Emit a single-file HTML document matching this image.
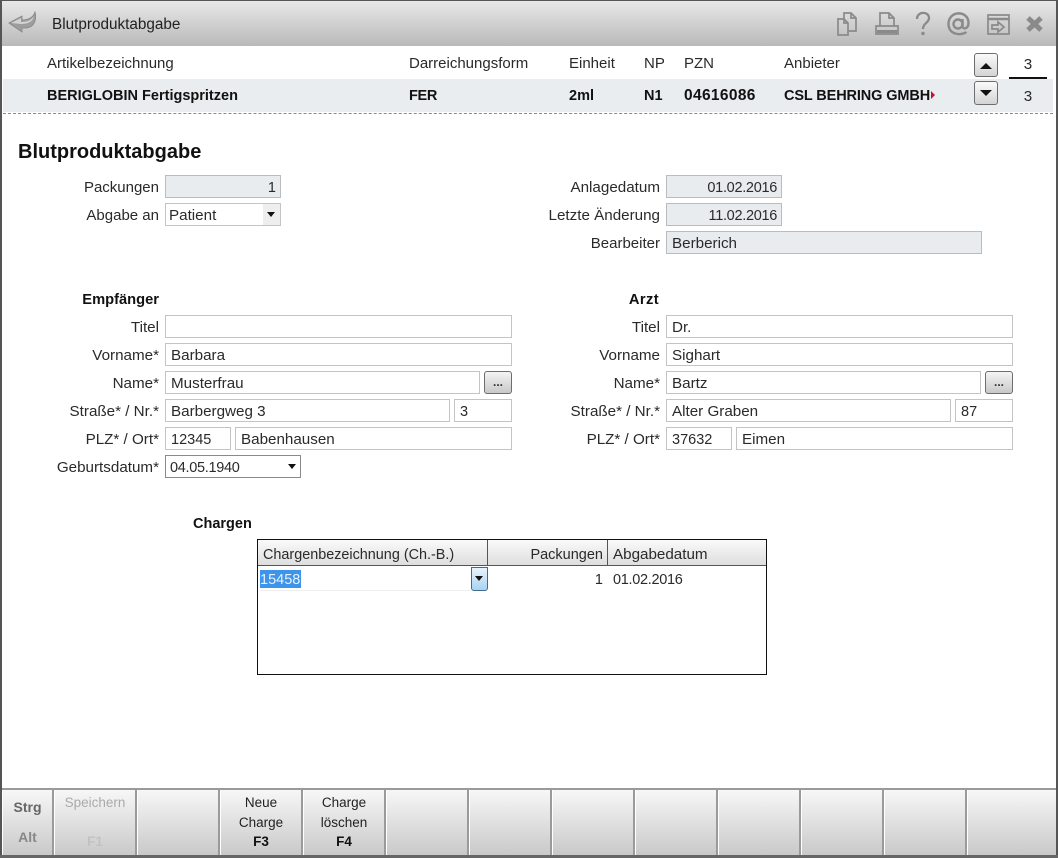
<!DOCTYPE html>
<html><head><meta charset="utf-8"><style>
html,body{margin:0;padding:0;background:#fff}
#p{position:relative;width:1058px;height:858px;overflow:hidden;background:#fff;font-family:"Liberation Sans",sans-serif;font-size:15.2px;color:#2a2a2a}
#p div{position:absolute;box-sizing:border-box;white-space:nowrap}
.l{height:20px;line-height:22px;text-align:right}
.t{height:20px;line-height:20px}
.h{font-size:15px;top:54px;line-height:20px}
.b{font-weight:bold;color:#111;font-size:14.5px}
.f{border:1px solid #c4c4c4;background:#fff;height:23px;line-height:23px;padding-left:5px}
.g{background:#e9ecef;border-color:#bcbcbc}
.r{text-align:right;padding-right:4px;padding-left:0}
.n{font-size:14.5px;line-height:25px}
.dt{font-size:14.5px;letter-spacing:-.3px;line-height:25px}
.d{background:linear-gradient(#f4f4f4,#c8c8c8);border:1px solid #6e6e6e;border-radius:3px;width:28px;height:23px;text-align:center;line-height:20px;font-size:12px;font-weight:bold;color:#333}
.k{top:790px;height:65px;background:linear-gradient(#f7f7f7,#c9c9c9);border-left:1px solid #fff;border-right:2px solid #9a9a9a;text-align:center;font-size:13.5px;line-height:19.5px;color:#222;padding-top:3px}
.tri{width:0;height:0;border-left:4px solid transparent;border-right:4px solid transparent}
</style></head><body><div id="p">
<div style="left:0;top:0;width:1058px;height:46px;background:linear-gradient(#e9e9e9,#b9b9b9)"></div>
<div style="left:0;top:0;width:1058px;height:1px;background:#555"></div>
<div style="left:0;top:0;width:2px;height:858px;background:#555"></div>
<div style="left:1056px;top:0;width:2px;height:858px;background:#555"></div>
<div style="left:0;top:855px;width:1058px;height:3px;background:#666"></div>

<svg style="position:absolute;left:8px;top:10px" width="28" height="24" viewBox="0 0 28 24"><path d="M1 13 L14 6 L14 10 C20 10 25 8 27 2 C29 10 26 17 19 18 L14 18 L14 22 Z" fill="#9d9d9d" stroke="#858585" stroke-width=".8"/><path d="M3 13 L13 8 L13 12 C18 12 23 11 26 6 C25 11 21 14 13 14Z" fill="#d2d2d2"/></svg>
<div class="t" style="left:52px;top:15px;font-size:15.3px;color:#222">Blutproduktabgabe</div>

<svg style="position:absolute;left:836px;top:11px" width="215" height="26" viewBox="0 0 215 26" fill="none" stroke="#8a8a8a">
<g stroke-width="1.7"><path d="M2 8h6l4 4v12H2z"/><path d="M8 8V2h7l5 5v13h-8"/><path d="M15 2v5h5M8 8v4h4"/></g>
<g stroke-width="1.7"><path d="M44 15V2h9l5 5v8"/><path d="M53 2v5h5"/><path d="M40 15h22v8H40z"/></g><path d="M41 20.500h20" stroke-width="3"/>
<path d="M81 8c0-8 12-8 12-1 0 5-6 5-6 11" stroke-width="2.300"/><circle cx="87" cy="22.500" r="1.700" fill="#8a8a8a" stroke="none"/>
<g stroke-width="2.400"><circle cx="122" cy="13" r="4.500"/><path d="M126.500 8v7c0 4 6 3 6-3 0-13-20-13-20 1 0 11 13 12 18 8"/></g>
<g stroke-width="1.700"><path d="M152 4h21v19h-21z"/><path d="M152 8h21" stroke-width="2.500"/><path d="M156 14h6v-3l6 5-6 5v-3h-6z"/></g>
<path d="M192 7l13 12M205 7l-13 12" stroke-width="5"/>
</svg>

<div class="t h" style="left:47px">Artikelbezeichnung</div>
<div class="t h" style="left:409px">Darreichungsform</div>
<div class="t h" style="left:569px">Einheit</div>
<div class="t h" style="left:644px">NP</div>
<div class="t h" style="left:684px">PZN</div>
<div class="t h" style="left:784px">Anbieter</div>
<div style="left:3px;top:79px;width:1050px;height:33px;background:#e9edf0"></div>
<div class="t b" style="left:47px;top:86px">BERIGLOBIN Fertigspritzen</div>
<div class="t b" style="left:409px;top:86px;letter-spacing:-.3px">FER</div>
<div class="t b" style="left:569px;top:86px">2ml</div>
<div class="t b" style="left:644px;top:86px">N1</div>
<div class="t b" style="left:684px;top:86px;font-size:15.5px;letter-spacing:.35px">04616086</div>
<div class="t b" style="left:784px;top:86px;letter-spacing:-.12px">CSL BEHRING GMBH</div>
<div style="left:931px;top:91px;width:0;height:0;border-left:4px solid #c8102e;border-top:4px solid transparent;border-bottom:4px solid transparent"></div>

<div class="d" style="left:974px;top:53px;width:24px;height:24px;background:linear-gradient(#fafafa,#d4d4d4)"><div class="tri" style="left:5px;top:9px;border-left-width:6px;border-right-width:6px;border-bottom:6px solid #111"></div></div>
<div class="d" style="left:974px;top:81px;width:24px;height:24px;background:linear-gradient(#fafafa,#d4d4d4)"><div class="tri" style="left:5px;top:8px;border-left-width:6px;border-right-width:6px;border-top:6px solid #111"></div></div>
<div class="t" style="left:1009px;top:55px;width:38px;text-align:center">3</div>
<div style="left:1009px;top:77px;width:38px;height:2px;background:#111"></div>
<div class="t" style="left:1009px;top:87px;width:38px;text-align:center">3</div>
<div style="left:3px;top:113px;width:1050px;border-top:1px dashed #8a8a8a"></div>

<div class="t b" style="left:18px;top:142px;font-size:20px">Blutproduktabgabe</div>

<div class="l" style="left:20px;width:139px;top:177px;font-size:15px">Packungen</div>
<div class="f g r n" style="left:165px;top:175px;width:116px">1</div>
<div class="l" style="left:20px;width:139px;top:205px;font-size:15px">Abgabe an</div>
<div class="f" style="left:165px;top:203px;width:116px;padding-left:3px">Patient</div>
<div style="left:263px;top:204px;width:17px;height:21px;background:#eee"></div>
<div class="tri" style="left:267px;top:212px;border-top:5px solid #111"></div>

<div class="l" style="left:500px;width:160px;top:177px">Anlagedatum</div>
<div class="f g r dt" style="left:666px;top:175px;width:116px">01.02.2016</div>
<div class="l" style="left:500px;width:160px;top:205px">Letzte Änderung</div>
<div class="f g r dt" style="left:666px;top:203px;width:116px">11.02.2016</div>
<div class="l" style="left:500px;width:160px;top:233px;font-size:15px">Bearbeiter</div>
<div class="f g" style="left:666px;top:231px;width:316px">Berberich</div>

<div class="t b" style="left:20px;width:139px;top:290px;text-align:right;font-size:14.7px">Empfänger</div>
<div class="l" style="left:20px;width:139px;top:317px">Titel</div>
<div class="f" style="left:165px;top:315px;width:347px"></div>
<div class="l" style="left:20px;width:139px;top:345px">Vorname*</div>
<div class="f" style="left:165px;top:343px;width:347px">Barbara</div>
<div class="l" style="left:20px;width:139px;top:373px">Name*</div>
<div class="f" style="left:165px;top:371px;width:315px">Musterfrau</div>
<div class="d" style="left:484px;top:371px">...</div>
<div class="l" style="left:20px;width:139px;top:401px">Straße* / Nr.*</div>
<div class="f" style="left:165px;top:399px;width:285px">Barbergweg 3</div>
<div class="f n" style="left:454px;top:399px;width:58px">3</div>
<div class="l" style="left:20px;width:139px;top:429px">PLZ* / Ort*</div>
<div class="f n" style="left:165px;top:427px;width:66px">12345</div>
<div class="f" style="left:235px;top:427px;width:277px">Babenhausen</div>
<div class="l" style="left:20px;width:139px;top:457px">Geburtsdatum*</div>
<div class="f dt" style="left:165px;top:455px;width:136px;border-color:#8a8a8a;padding-left:4px">04.05.1940</div>
<div class="tri" style="left:288px;top:464px;border-top:5px solid #111"></div>

<div class="t b" style="left:500px;width:159px;top:290px;text-align:right;font-size:14.7px;letter-spacing:.4px">Arzt</div>
<div class="l" style="left:500px;width:160px;top:317px">Titel</div>
<div class="f" style="left:666px;top:315px;width:347px">Dr.</div>
<div class="l" style="left:500px;width:160px;top:345px">Vorname</div>
<div class="f" style="left:666px;top:343px;width:347px">Sighart</div>
<div class="l" style="left:500px;width:160px;top:373px">Name*</div>
<div class="f" style="left:666px;top:371px;width:315px">Bartz</div>
<div class="d" style="left:985px;top:371px">...</div>
<div class="l" style="left:500px;width:160px;top:401px">Straße* / Nr.*</div>
<div class="f" style="left:666px;top:399px;width:285px">Alter Graben</div>
<div class="f n" style="left:955px;top:399px;width:58px">87</div>
<div class="l" style="left:500px;width:160px;top:429px">PLZ* / Ort*</div>
<div class="f n" style="left:666px;top:427px;width:66px">37632</div>
<div class="f" style="left:736px;top:427px;width:277px">Eimen</div>

<div class="t b" style="left:193px;top:514px;font-size:14.5px">Chargen</div>
<div style="left:257px;top:539px;width:510px;height:136px;border:1px solid #111;background:#fff"></div>
<div style="left:258px;top:540px;width:508px;height:26px;background:linear-gradient(#fafafa,#dedede);border-bottom:1px solid #555"></div>
<div style="left:487px;top:540px;width:1px;height:26px;background:#555"></div>
<div style="left:607px;top:540px;width:1px;height:26px;background:#555"></div>
<div class="t" style="left:263px;top:545px;font-size:14.4px">Chargenbezeichnung (Ch.-B.)</div>
<div class="t" style="left:490px;width:113px;top:545px;text-align:right;font-size:14.5px">Packungen</div>
<div class="t" style="left:613px;top:545px">Abgabedatum</div>
<div style="left:260px;top:570px;width:41px;height:18px;background:#3d94ea"></div>
<div class="t" style="left:260px;top:570px;color:#e8f2fc;font-size:14.5px">15458</div>
<div style="left:260px;top:590px;width:211px;height:1px;background:#eee"></div>
<div style="left:471px;top:567px;width:17px;height:24px;background:linear-gradient(#e8f3fb,#a9d3f2);border:1px solid #3f6d8f;border-radius:0 0 3px 3px"></div>
<div class="tri" style="left:475px;top:576px;border-top:5px solid #111"></div>
<div class="t" style="left:490px;width:113px;top:570px;text-align:right;font-size:14.5px">1</div>
<div class="t" style="left:613px;top:570px;font-size:14.5px;letter-spacing:-.3px">01.02.2016</div>

<div style="left:2px;top:788px;width:1054px;height:2px;background:#9a9a9a"></div>
<div class="k" style="left:2px;width:52px;color:#666;font-weight:bold;padding-top:2px;line-height:30px;font-size:14px">Strg<br><span style="color:#888">Alt</span></div>
<div class="k" style="left:54px;width:83px;color:#aaa">Speichern<br><br><b style="color:#c2c2c2">F1</b></div>
<div class="k" style="left:137px;width:83px"></div>
<div class="k" style="left:220px;width:83px">Neue<br>Charge<br><b style="color:#111">F3</b></div>
<div class="k" style="left:303px;width:83px">Charge<br>löschen<br><b style="color:#111">F4</b></div>
<div class="k" style="left:386px;width:83px"></div>
<div class="k" style="left:469px;width:83px"></div>
<div class="k" style="left:552px;width:83px"></div>
<div class="k" style="left:635px;width:83px"></div>
<div class="k" style="left:718px;width:83px"></div>
<div class="k" style="left:801px;width:83px"></div>
<div class="k" style="left:884px;width:83px"></div>
<div class="k" style="left:967px;width:89px;border-right:0"></div>
</div></body></html>
